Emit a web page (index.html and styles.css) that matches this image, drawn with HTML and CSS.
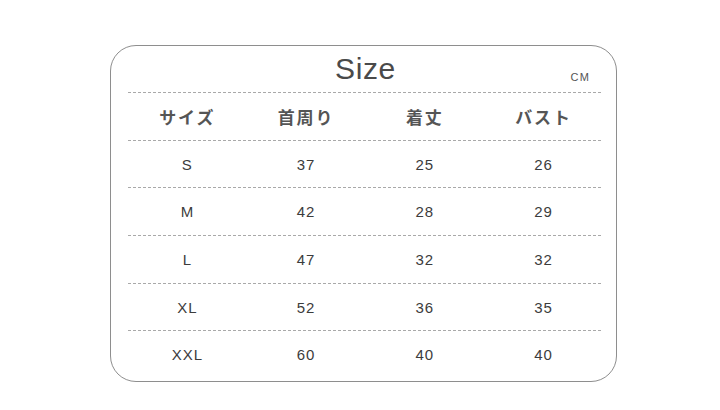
FILE: index.html
```html
<!DOCTYPE html>
<html lang="ja">
<head>
<meta charset="utf-8">
<link rel="stylesheet" href="styles.css">
</head>
<body>
<div class="card">
  <div class="title-row">
    <span></span>
    <h1 class="title">Size</h1>
    <span class="unit">CM</span>
  </div>
  <div class="line"></div>
  <div class="row head h47">
    <span>サイズ</span><span>首周り</span><span>着丈</span><span>バスト</span>
  </div>
  <div class="line"></div>
  <div class="row h46"><span>S</span><span>37</span><span>25</span><span>26</span></div>
  <div class="line"></div>
  <div class="row h47"><span>M</span><span>42</span><span>28</span><span>29</span></div>
  <div class="line"></div>
  <div class="row h47"><span>L</span><span>47</span><span>32</span><span>32</span></div>
  <div class="line"></div>
  <div class="row h46"><span>XL</span><span>52</span><span>36</span><span>35</span></div>
  <div class="line"></div>
  <div class="row h47"><span>XXL</span><span>60</span><span>40</span><span>40</span></div>
</div>
</body>
</html>
```

FILE: styles.css
```css
html, body {
  margin: 0;
  padding: 0;
  background: #ffffff;
}
body {
  width: 720px;
  height: 410px;
  overflow: hidden;
  font-family: "Liberation Sans", Arial, sans-serif;
}
.card {
  box-sizing: border-box;
  margin: 45px 0 0 110px;
  width: 507px;
  height: 337px;
  border: 1px solid #8e8e8e;
  border-radius: 26px;
  padding: 1px 13px 0 17px;
  background: #fff;
}
.title-row {
  height: 45px;
  display: grid;
  grid-template-columns: 1fr auto 1fr;
  align-items: end;
}
.title {
  margin: 0 0 8px 0;
  font-weight: normal;
  font-size: 30px;
  line-height: 30px;
  letter-spacing: 0.6px;
  color: #4a4a4a;
}
.unit {
  justify-self: end;
  margin: 0 13px 9px 0;
  font-size: 11px;
  line-height: 11px;
  letter-spacing: 1.2px;
  color: #555;
}
.line {
  height: 1px;
  background: repeating-linear-gradient(to right, #a9a9a9 0 3px, transparent 3px 5px);
}
.row {
  display: grid;
  grid-template-columns: repeat(4, 1fr);
  align-items: center;
  justify-items: center;
  font-size: 15px;
  letter-spacing: 1px;
  color: #3c3c3c;
}
.h47 { height: 47px; }
.h46 { height: 46px; }
.row.head {
  font-family: "Noto Sans CJK JP", "Noto Sans", sans-serif;
  font-weight: bold;
  font-size: 17px;
  letter-spacing: 2px;
  color: #555;
}
```
